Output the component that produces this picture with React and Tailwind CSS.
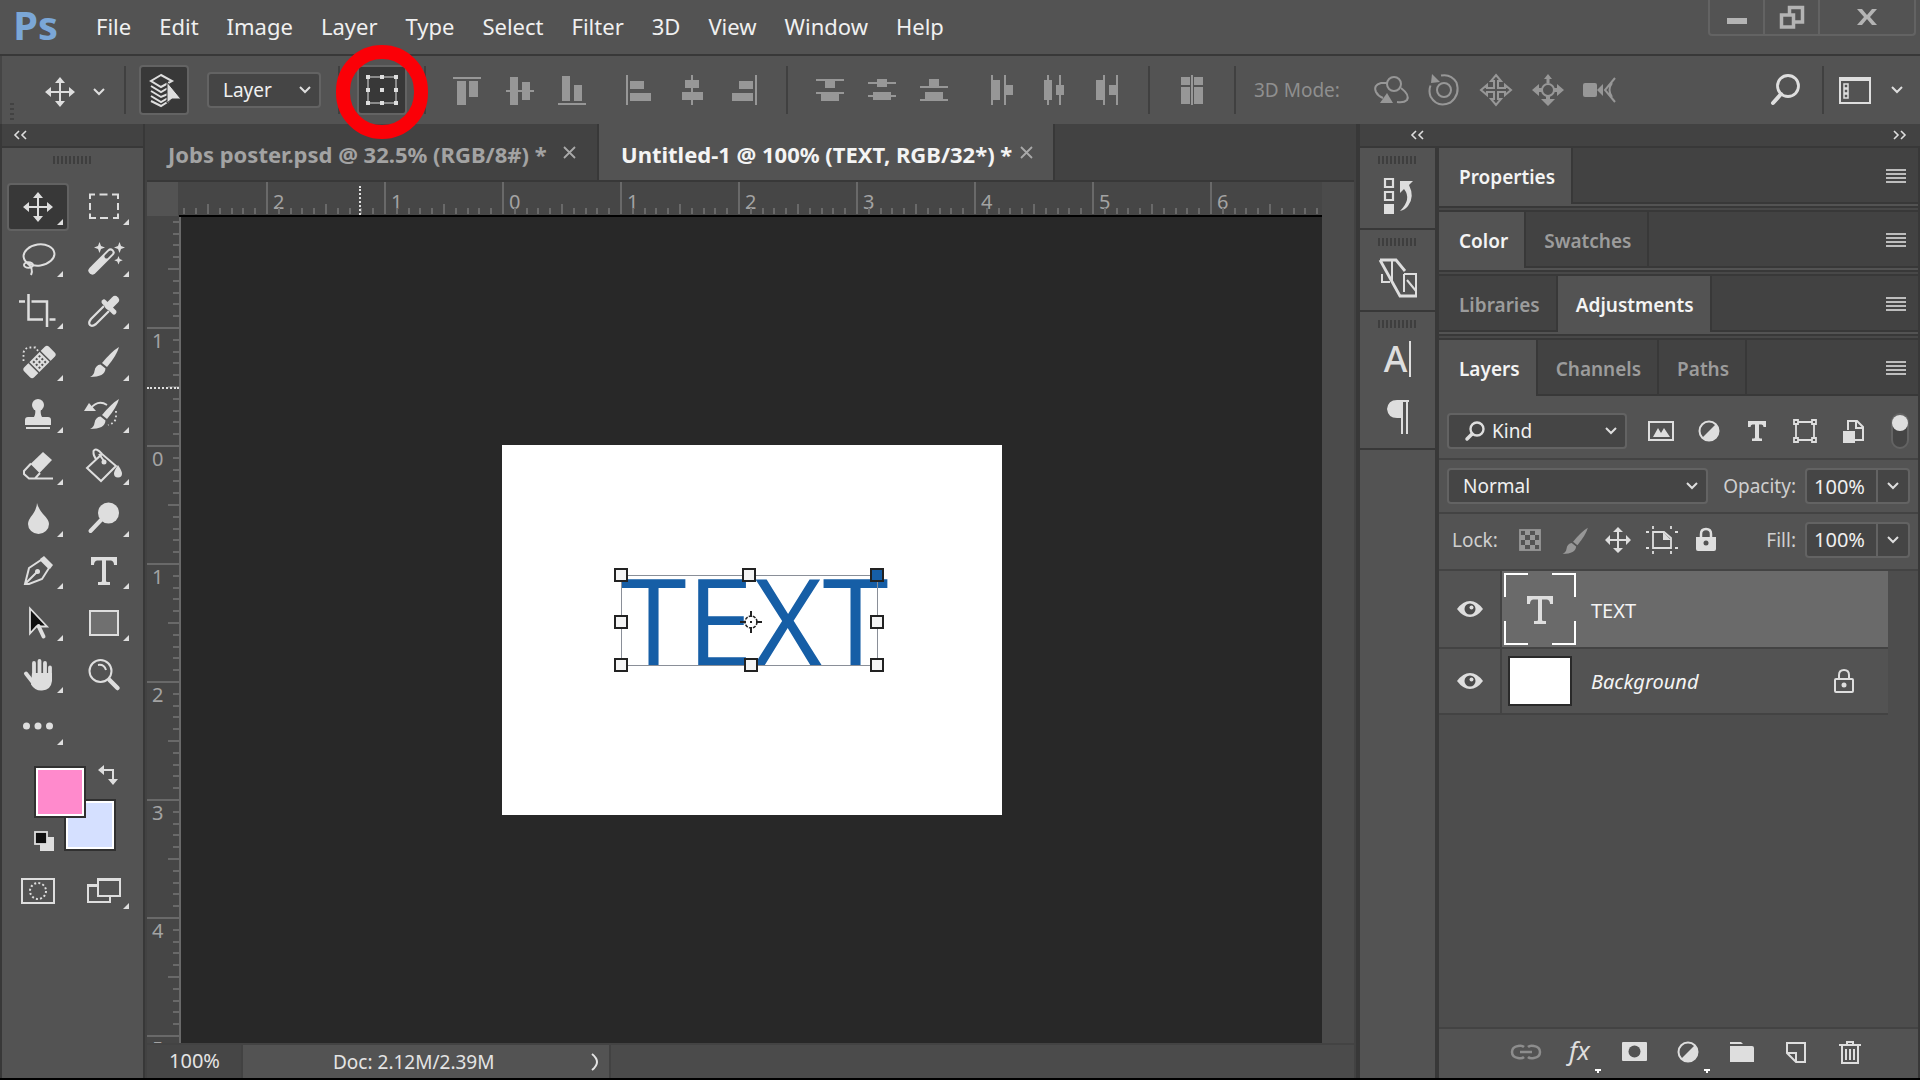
import React from "react";

const SANS = "font-['Noto_Sans','Open_Sans',sans-serif]";

function Svg({ w = 34, h = 34, className = "", children }) {
  return (
    <svg
      width={w}
      height={h}
      viewBox={`0 0 ${w} ${h}`}
      className={`shrink-0 overflow-visible ${className}`}
      fill="currentColor"
      aria-hidden="true"
    >
      {children}
    </svg>
  );
}

function Chevron({ className = "" }) {
  return (
    <Svg w={12} h={8} className={className}>
      <path d="M1 1l5 5 5-5" fill="none" stroke="currentColor" strokeWidth="2" />
    </Svg>
  );
}

const stroke = { fill: "none", stroke: "currentColor" };

/* ---------- tool glyphs (34 x 34) ---------- */

const MoveGlyph = () => (
  <>
    <path d="M17 5v24M5 17h24" {...stroke} strokeWidth="2" />
    <path d="M17 2l5 6H12zM17 32l5-6H12zM2 17l6-5v10zM32 17l-6-5v10z" />
  </>
);

const TypeGlyph = () => (
  <path d="M4 3h26v8h-3q0-4-3-4.500h-5V27q0 1 1.500 1H23v3H11v-3h2.500q1.500 0 1.500-1V6.500h-5q-3 .5-3 4.500H4z" />
);

const SmallTypeGlyph = () => (
  <path d="M2 1h18v6h-2.500q0-2.500-2-2.500H13V17.500q0 1 1.500 1H16V21H6v-2.500h1.500q1.500 0 1.500-1V4.500H6.500q-2 0-2 2.500H2z" />
);

const BrushShape = () => (
  <>
    <path d="M32 1q-2 8-12 20l-5-4Q25 5 32 1z" />
    <path d="M13.500 18.500l5 4Q18 31 3 31q4-2 4.500-6 1-6 6-6.500z" />
  </>
);

const TOOLS = [
  { name: "Move", active: true, glyph: <MoveGlyph /> },
  {
    name: "Rectangular Marquee",
    glyph: (
      <path
        d="M3 9V4.500h5M12.500 4.500h8M25 4.500h6V9M31 13v7M31 23.500V28h-5M21 28h-8M9 28H3v-4.500M3 20v-7"
        {...stroke}
        strokeWidth="2"
      />
    ),
  },
  {
    name: "Lasso",
    glyph: (
      <g {...stroke} strokeWidth="2">
        <ellipse cx="18" cy="13" rx="15.500" ry="10.500" transform="rotate(-8 18 13)" />
        <ellipse cx="7.500" cy="23" rx="4.500" ry="2.800" />
        <path d="M6 21q7 5 4 12" />
      </g>
    ),
  },
  {
    name: "Magic Wand",
    glyph: (
      <>
        <path d="M5.500 28.500L23.500 10.500" stroke="currentColor" strokeWidth="8" strokeLinecap="round" />
        <path d="M19.500 14.500l4-4" stroke="#535353" strokeWidth="4" strokeLinecap="round" />
        <path d="M12.500 0l1.500 4 4 1.500-4 1.500-1.500 4-1.500-4-4-1.500 4-1.500zM32.500 0l1.500 4 4 1.500-4 1.500-1.500 4-1.500-4-4-1.500 4-1.500zM31.500 14l1.200 3 3 1.300-3 1.200-1.200 3-1.200-3-3-1.200 3-1.300z" />
      </>
    ),
  },
  {
    name: "Crop",
    glyph: (
      <path d="M-2 7.500h6M7.500 0v25.500H22M10.500 7.500h15.500V33M28.500 25.500h6" {...stroke} strokeWidth="2.500" />
    ),
  },
  {
    name: "Eyedropper",
    glyph: (
      <>
        <path d="M22 12l6-6" stroke="currentColor" strokeWidth="8" strokeLinecap="round" />
        <path d="M17 8l10 10" stroke="currentColor" strokeWidth="5" strokeLinecap="round" />
        <path d="M17 12L4 25Q1 29 3 31q2 2 6-1L22 17" {...stroke} strokeWidth="2.200" />
      </>
    ),
  },
  {
    name: "Spot Healing Brush",
    glyph: (
      <>
        <g transform="rotate(-45 18.500 16)">
          <rect x="1" y="9" width="35" height="14" rx="3" />
          <path d="M10.500 8v16M26.500 8v16" stroke="#535353" strokeWidth="1.500" />
          <g fill="#535353">
            {[13.5, 17.5, 21.5].map((x) =>
              [11, 15, 19].map((y) => <rect key={`${x}-${y}`} x={x} y={y} width="2" height="2" />)
            )}
          </g>
        </g>
        <path d="M2.500 15V6.500Q4 2 8 1.500h6.500l3 4" {...stroke} strokeWidth="1.800" strokeDasharray="1.800 2.400" />
      </>
    ),
  },
  { name: "Brush", glyph: <BrushShape /> },
  {
    name: "Clone Stamp",
    glyph: (
      <>
        <circle cx="17" cy="7" r="6" />
        <path d="M14 10h6q-1 6 1 9h6q3 0 3 3v5H4v-5q0-3 3-3h6q2-3 1-9zM5 29h24v2H5z" />
      </>
    ),
  },
  {
    name: "History Brush",
    glyph: (
      <>
        <BrushShape />
        <path d="M3 11Q11 1 20 7" {...stroke} strokeWidth="1.800" />
        <path d="M-3 13l5-8 7 8z" />
        <path d="M29 13v7q-1 5-8 7" {...stroke} strokeWidth="1.800" strokeDasharray="1.800 2.600" />
      </>
    ),
  },
  {
    name: "Eraser",
    glyph: (
      <>
        <path d="M22 2l9 8-12.500 13-9-9z" />
        <path d="M10 13.500L3 21v3l5 4.500h6l5-5.500M8 28.500h24" {...stroke} strokeWidth="2" />
      </>
    ),
  },
  {
    name: "Paint Bucket",
    glyph: (
      <>
        <path d="M15 4L0 18l14 13 15-15zM15 4q-6-7-8.500-3Q6 6 10 10" {...stroke} strokeWidth="2" />
        <path d="M12 4l5 7" {...stroke} strokeWidth="2" />
        <circle cx="17" cy="12" r="2.500" />
        <path d="M31 15q4 6 4 8.500a4 4 0 0 1-8 0Q27 21 31 15z" />
      </>
    ),
  },
  { name: "Blur", glyph: <path d="M16 1q1 5 6 11 6 6 6 10a10.500 10 0 0 1-21 0q0-4 5-10 4-6 4-11z" /> },
  {
    name: "Dodge",
    glyph: (
      <>
        <circle cx="21.500" cy="11" r="10.500" />
        <path d="M14 18L3.500 29" stroke="currentColor" strokeWidth="4" strokeLinecap="round" />
      </>
    ),
  },
  {
    name: "Pen",
    glyph: (
      <>
        <path d="M4 30L8 14 20 6l8 8-7 11-13 5zM5 29L16 18" {...stroke} strokeWidth="2" />
        <circle cx="16.500" cy="17.500" r="2.500" />
        <path d="M23 2l9 9-3 4L19 5z" />
      </>
    ),
  },
  { name: "Horizontal Type", glyph: <TypeGlyph /> },
  {
    name: "Path Selection",
    glyph: (
      <>
        <path d="M9 2.500v25l6.500-7H26z" fill="#101010" stroke="currentColor" strokeWidth="1.800" />
        <path d="M17.500 20l5 10.500" stroke="currentColor" strokeWidth="4" strokeLinecap="round" />
      </>
    ),
  },
  {
    name: "Rectangle",
    glyph: <rect x="3" y="5" width="28" height="24" fill="#707070" stroke="currentColor" strokeWidth="2" />,
  },
  {
    name: "Hand",
    glyph: (
      <>
        <path d="M13 18V5M18.500 17V3M24 18V5M29 20V9.500" {...stroke} strokeWidth="3.800" strokeLinecap="round" />
        <path d="M5 15.500l7 9" {...stroke} strokeWidth="4" strokeLinecap="round" />
        <path d="M11 15h20v8q-1 9-10 9.500-7 .5-11-6z" />
      </>
    ),
  },
  {
    name: "Zoom",
    noMenu: true,
    glyph: (
      <>
        <circle cx="13.500" cy="13" r="11" {...stroke} strokeWidth="2" />
        <path d="M11 7q6-1 8 5" {...stroke} strokeWidth="2" />
        <path d="M22.500 22l8 8" stroke="currentColor" strokeWidth="4.500" strokeLinecap="round" />
      </>
    ),
  },
  {
    name: "Edit Toolbar",
    glyph: (
      <>
        <circle cx="5.500" cy="16" r="3.500" />
        <circle cx="17" cy="16" r="3.500" />
        <circle cx="28.500" cy="16" r="3.500" />
      </>
    ),
  },
];

function Tool({ name, glyph, active, noMenu }) {
  return (
    <button
      type="button"
      aria-label={name}
      className="relative flex h-13 items-center justify-center text-[#dedede]"
    >
      <span
        className={
          active
            ? "flex h-12 w-full items-center justify-center rounded border-2 border-[#626262] bg-[#383838] mx-[2px]"
            : "flex items-center justify-center"
        }
      >
        <Svg>{glyph}</Svg>
      </span>
      {!noMenu && (
        <Svg w={6} h={6} className="absolute right-2 bottom-2">
          <path d="M6 0v6H0z" />
        </Svg>
      )}
    </button>
  );
}

/* ---------- options bar ---------- */

const ALIGN = [
  ["Align top edges", <path d="M2 4h28v2H2zM6 8h9v24H6zM18 8h9v16h-9z" />],
  ["Align vertical centers", <path d="M3 17h28v2H3zM7 4h8v28H7zM19 9h8v18h-8z" />],
  ["Align bottom edges", <path d="M3 30h28v2H3zM7 3h8v25H7zM19 12h8v16h-8z" />],
];
const ALIGN_H = [
  ["Align left edges", <path d="M3 2h2v30H3zM7 8h14v8H7zM7 20h21v8H7z" />],
  ["Align horizontal centers", <path d="M16 2h2v30h-2zM10 7h14v8H10zM7 19h21v8H7z" />],
  ["Align right edges", <path d="M28 2h2v30h-2zM12 8h14v8H12zM5 20h21v8H5z" />],
];
const DIST_V = [
  ["Distribute top edges", <path d="M3 6h28v2H3zM12 8h10v7H12zM3 19h28v2H3zM8 21h18v7H8z" />],
  ["Distribute vertical centers", <path d="M3 9h28v2H3zM12 6h10v8H12zM3 22h28v2H3zM8 19h18v8H8z" />],
  ["Distribute bottom edges", <path d="M3 13h28v2H3zM12 6h10v7H12zM3 26h28v2H3zM8 19h18v7H8z" />],
];
const DIST_H = [
  ["Distribute left edges", <path d="M6 2h2v30H6zM8 7h7v20H8zM19 2h2v30h-2zM21 12h7v10h-7z" />],
  ["Distribute horizontal centers", <path d="M10 2h2v30h-2zM7 7h8v20H7zM22 2h2v30h-2zM19 12h8v10h-8z" />],
  ["Distribute right edges", <path d="M14 2h2v30h-2zM7 7h7v20H7zM27 2h2v30h-2zM20 12h7v10h-7z" />],
];
const AUTO = [
  ["Auto-align layers", <path d="M6 4h9v8H6zM6 14h9v17H6zM16 2h2v30h-2zM19 4h9v8h-9zM19 14h9v17h-9z" />],
];
const MODE_3D = [
  [
    "Orbit",
    <>
      <circle cx="19" cy="11" r="7" {...stroke} strokeWidth="2" />
      <path d="M12 10H6Q-2 12 1 19 3 23 8 25M26 15q9 7 6 12-3 3-10 2" {...stroke} strokeWidth="2" />
      <path d="M12 20l6 10H5z" />
    </>,
  ],
  [
    "Roll",
    <>
      <circle cx="17" cy="17" r="7" {...stroke} strokeWidth="2" />
      <path d="M14 2.500q10-2 15.500 7 4 12-6 20-13 6-20-6-2-6 0-11" {...stroke} strokeWidth="2" />
      <path d="M5 1l8 8-9 1z" />
    </>,
  ],
  [
    "Pan",
    <path
      d="M17 2l5 6h-3v7h7v-3l6 5-6 5v-3h-7v7h3l-5 6-5-6h3v-7H8v3l-6-5 6-5v3h7V8h-3z"
      {...stroke}
      strokeWidth="2"
    />,
  ],
  [
    "Slide",
    <>
      <circle cx="17" cy="17" r="6" {...stroke} strokeWidth="2" />
      <path d="M17 1l4 5h-2.500v4h-3V6H13zM1 17l7-6v4h3v4H8v4zM33 17l-7-6v4h-3v4h3v4zM17 33l-7-7h5v-3h4v3h5z" />
    </>,
  ],
  [
    "Zoom camera",
    <>
      <rect x="0" y="10" width="14" height="14" rx="2" />
      <path d="M14 17l6-6v12z" />
      <path d="M32 5L22 17l10 12M29 10q-5 7 0 14" {...stroke} strokeWidth="2" />
    </>,
  ],
];

function IconGroup({ items, className = "" }) {
  return (
    <div className={`flex ${className}`}>
      {items.map(([name, glyph]) => (
        <button key={name} type="button" aria-label={name} className="flex w-13 justify-center text-[#979797]">
          <Svg>{glyph}</Svg>
        </button>
      ))}
    </div>
  );
}

function Divider({ className = "" }) {
  return <span className={`h-12 w-[2px] shrink-0 bg-[#404040] ${className}`} />;
}

function SelectBox({ label, value, className = "", textClass = "", icon }) {
  return (
    <div className={`relative flex h-9 items-center rounded border-2 border-[#636363] bg-[#454545] ${className}`}>
      {icon}
      <select
        aria-label={label}
        defaultValue={value}
        className={`h-full w-full appearance-none bg-transparent text-[19px] leading-7 text-[#f0f0f0] outline-none ${textClass}`}
      >
        <option>{value}</option>
      </select>
      <Chevron className="pointer-events-none absolute right-2 text-[#dedede]" />
    </div>
  );
}

const MENUS = ["File", "Edit", "Image", "Layer", "Type", "Select", "Filter", "3D", "View", "Window", "Help"];

function TitleBar() {
  return (
    <header className="flex h-14 shrink-0 items-start border-b-2 border-[#383838] bg-[#535353]">
      <span className="w-24 pl-[13px] font-['Open_Sans',sans-serif] text-[40px] leading-[50px] font-bold text-[#7ba7d7]">
        Ps
      </span>
      <nav className="flex gap-7 pt-3" aria-label="Main menu">
        {MENUS.map((m) => (
          <button key={m} type="button" className="text-[22px] leading-7 text-[#f0f0f0]">
            {m}
          </button>
        ))}
      </nav>
      <div className="mr-1 ml-auto flex h-9 rounded-b border-2 border-t-0 border-[#636363] text-[#b4b4b4]">
        <button type="button" aria-label="Minimize" className="flex w-[55px] items-center justify-center border-r-2 border-[#636363]">
          <Svg w={20} h={20}>
            <path d="M0 11h20v6H0z" />
          </Svg>
        </button>
        <button type="button" aria-label="Restore" className="flex w-[55px] items-center justify-center border-r-2 border-[#636363]">
          <Svg w={24} h={24}>
            <path d="M1.500 10h12v12h-12zM9.500 10V2.500h13V17h-9" {...stroke} strokeWidth="3.500" />
          </Svg>
        </button>
        <button type="button" aria-label="Close" className="flex w-[94px] items-center justify-center">
          <Svg w={20} h={18}>
            <path d="M0 1h5l5 6 5-6h5l-7 8 7 8h-5l-5-6-5 6H0l7-8z" />
          </Svg>
        </button>
      </div>
    </header>
  );
}

function OptionsBar() {
  return (
    <div className="flex h-17 shrink-0 items-center border-l-2 border-[#454545] bg-[#535353]">
      <span className="mb-1 ml-2 flex w-1 flex-col gap-[3px] self-end">
        {[0, 1, 2, 3].map((i) => (
          <i key={i} className="h-[2px] bg-[#424242]" />
        ))}
      </span>
      <button type="button" aria-label="Move tool presets" className="ml-[29px] flex items-center gap-4 pt-1 text-[#dedede]">
        <Svg>
          <MoveGlyph />
        </Svg>
        <Chevron />
      </button>
      <Divider className="ml-[19px]" />
      <button
        type="button"
        aria-label="Auto-select"
        className="ml-[13px] flex h-[50px] w-[50px] items-center justify-center rounded border-2 border-[#636363] bg-[#383838] text-[#dedede]"
      >
        <Svg>
          <g {...stroke} strokeWidth="2">
            <path d="M14 2L4 8l10 6 11-6zM4 13l10 6 7-4M4 18l10 6 7-3M4 23l10 6 7-4M4 28l10 5 8-5" />
          </g>
          <path d="M20 9v21l5-4h9z" stroke="#383838" strokeWidth="1" />
        </Svg>
      </button>
      <SelectBox label="Auto-select target" value="Layer" className="ml-[18px] w-[114px]" textClass="pl-[14px]" />
      <Divider className="ml-[17px]" />
      <div className="relative ml-[17px]">
        <button
          type="button"
          aria-label="Show transform controls"
          className="flex h-[50px] w-[50px] items-center justify-center rounded border-2 border-[#636363] bg-[#383838] text-[#dedede]"
        >
          <Svg>
            <path d="M3 4h28v26H3z" {...stroke} strokeWidth="1" />
            <path d="M1 2h4v4H1zM15 2h4v4h-4zM29 2h4v4h-4zM1 15h4v4H1zM15 15h4v4h-4zM29 15h4v4h-4zM1 28h4v4H1zM15 28h4v4h-4zM29 28h4v4h-4z" />
          </Svg>
        </button>
        <span className="pointer-events-none absolute -top-5 -right-[21px] -bottom-6 -left-[21px] z-20 rounded-full border-[14px] border-[#fb0007]" />
      </div>
      <Divider className="ml-[17px]" />
      <IconGroup items={ALIGN} className="ml-4" />
      <IconGroup items={ALIGN_H} className="ml-4" />
      <Divider className="ml-4" />
      <IconGroup items={DIST_V} className="ml-4" />
      <IconGroup items={DIST_H} className="ml-4" />
      <Divider className="ml-4" />
      <IconGroup items={AUTO} className="ml-4" />
      <Divider className="ml-4" />
      <span className="ml-[18px] text-[19px] leading-7 text-[#8f8f8f]">3D Mode:</span>
      <IconGroup items={MODE_3D} className="ml-[26px]" />
      <button type="button" aria-label="Search" className="mr-[18px] ml-auto text-[#dedede]">
        <Svg>
          <circle cx="18" cy="13" r="10.500" {...stroke} strokeWidth="2.800" />
          <path d="M11 21l-8 9" stroke="currentColor" strokeWidth="4" strokeLinecap="round" />
        </Svg>
      </button>
      <Divider />
      <button type="button" aria-label="Workspace" className="mr-[17px] ml-[14px] flex items-center gap-[19px] text-[#dedede]">
        <Svg>
          <path d="M2 5h30v25H2z" {...stroke} strokeWidth="2" />
          <path d="M1 4h32v4H1z" />
          <path d="M6 11h4v4H6zM6 16h4v4H6zM6 21h4v4H6z" {...stroke} strokeWidth="1.500" />
        </Svg>
        <Chevron />
      </button>
    </div>
  );
}

/* ---------- tool panel ---------- */

function Arrows({ flip }) {
  return (
    <Svg w={13} h={10}>
      <path
        d={flip ? "M1 1l4 4-4 4M8 1l4 4-4 4" : "M5 1L1 5l4 4M12 1L8 5l4 4"}
        {...stroke}
        strokeWidth="1.600"
      />
    </Svg>
  );
}

function Grip() {
  return (
    <Svg w={40} h={8}>
      <path d="M1 0v8M5 0v8M9 0v8M13 0v8M17 0v8M21 0v8M25 0v8M29 0v8M33 0v8M37 0v8" stroke="#3e3e3e" strokeWidth="2" />
    </Svg>
  );
}

function ToolPanel() {
  return (
    <aside className="flex w-[145px] shrink-0 flex-col border-x-2 border-[#383838] bg-[#535353]">
      <button
        type="button"
        aria-label="Collapse tools"
        className="flex h-6 items-center border-b-2 border-[#383838] bg-[#424242] pl-3 text-[#dedede]"
      >
        <Arrows />
      </button>
      <div className="flex justify-center pt-2 pb-[17px]">
        <Grip />
      </div>
      <div className="ml-[3px] grid w-33 grid-cols-2">
        {TOOLS.map((t) => (
          <Tool key={t.name} {...t} />
        ))}
      </div>
      <div className="relative mt-[10px] ml-8 h-[84px] w-21 text-[#dedede]">
        <button type="button" aria-label="Background color" className="absolute top-9 right-[2px] size-[52px] border-2 border-[#303030] bg-[#d5e0ff] ring-2 ring-white ring-inset" />
        <button type="button" aria-label="Foreground color" className="absolute top-[3px] left-0 size-[52px] border-2 border-[#303030] bg-[#ff8acc] ring-2 ring-white ring-inset" />
        <button type="button" aria-label="Swap colors" className="absolute top-[2px] right-0">
          <Svg w={20} h={20}>
            <path d="M4 5h11v11" {...stroke} strokeWidth="2" />
            <path d="M0 5l6-5v10zM15 20l-5-6h10z" />
          </Svg>
        </button>
        <button type="button" aria-label="Default colors" className="absolute -bottom-1 left-0">
          <Svg w={20} h={20}>
            <path d="M6 6h14v14H6z" />
            <rect x="1" y="1" width="12" height="12" fill="#101010" stroke="currentColor" strokeWidth="1.800" />
          </Svg>
        </button>
      </div>
      <div className="mt-[18px] ml-[3px] grid w-33 grid-cols-2 text-[#dedede]">
        <button type="button" aria-label="Quick mask" className="flex h-13 items-center justify-center">
          <Svg>
            <rect x="1" y="5" width="32" height="24" {...stroke} strokeWidth="2" />
            <circle cx="17" cy="17" r="8" {...stroke} strokeWidth="2" strokeDasharray="2 2.200" />
          </Svg>
        </button>
        <button type="button" aria-label="Screen mode" className="relative flex h-13 items-center justify-center">
          <Svg>
            <path d="M10 11H1v17h22v-5M11 5h22v17H11z" {...stroke} strokeWidth="2" />
            <path d="M10 4h24v3H10zM0 10h11v3H0z" />
          </Svg>
          <Svg w={6} h={6} className="absolute right-2 bottom-2">
            <path d="M6 0v6H0z" />
          </Svg>
        </button>
      </div>
    </aside>
  );
}

/* ---------- document ---------- */

const H_UNITS = ["", 2, 1, 0, 1, 2, 3, 4, 5, 6];
const V_UNITS = ["", 1, 0, 1, 2, 3, 4, 5];
const TENTHS = [1, 2, 3, 4, 5, 6, 7, 8, 9];

function HRuler() {
  return (
    <div className="relative min-w-0 flex-1 overflow-hidden border-b-2 border-black bg-[#464646]">
      <div className="-ml-[31px] flex">
        {H_UNITS.map((n, i) => (
          <div key={i} className="h-8 w-[118px] shrink-0 border-l-2 border-[#696969]">
            <div className="-mb-8 h-8 pt-1 pl-[5px] text-xl leading-8 text-[#a3a3a3]">{n}</div>
            <Svg w={116} h={32} className="block">
              {TENTHS.map((t) => (
                <path key={t} d={`M${Math.round(t * 11.8) - 1} 32v${t === 5 ? -10 : -6}`} stroke="#696969" strokeWidth="2" />
              ))}
            </Svg>
          </div>
        ))}
      </div>
      <span className="absolute top-1 bottom-0 left-45 border-l-2 border-dotted border-[#e0e0e0]" />
    </div>
  );
}

function VRuler() {
  return (
    <div className="relative w-[34px] shrink-0 overflow-hidden border-r-2 border-[#696969] bg-[#464646]">
      <div className="-mt-2 flex flex-col">
        {V_UNITS.map((n, i) => (
          <div key={i} className="flex h-[118px] shrink-0 border-t-2 border-[#696969]">
            <div className="w-6 pl-[5px] text-xl leading-6 text-[#a3a3a3]">{n}</div>
            <Svg w={8} h={116}>
              {TENTHS.map((t) => (
                <path key={t} d={`M8 ${Math.round(t * 11.8) - 1}h${t === 5 ? -11 : -6}`} stroke="#696969" strokeWidth="2" />
              ))}
            </Svg>
          </div>
        ))}
      </div>
      <span className="absolute top-[170px] right-0 left-0 border-t-2 border-dotted border-[#e0e0e0]" />
    </div>
  );
}

const HANDLES = [
  [8, 8],
  [136, 8],
  [264, 8],
  [8, 55],
  [264, 55],
  [8, 98],
  [138, 98],
  [264, 98],
];

function Artboard() {
  return (
    <div className="relative h-[370px] w-[500px] bg-white">
      <div className="absolute top-[122px] left-[111px] h-[108px] w-[274px]">
        <span className="absolute -top-[22px] left-2 font-['Open_Sans',sans-serif] text-[120px] leading-[150px] whitespace-nowrap text-[#165ea6]">
          TEXT
        </span>
        <svg width="274" height="108" viewBox="0 0 274 108" className="absolute inset-0" aria-hidden="true">
          <rect x="8.500" y="8.500" width="256" height="90" fill="none" stroke="#8a8f98" />
          {HANDLES.map(([x, y]) => (
            <rect
              key={`${x}-${y}`}
              x={x - 6}
              y={y - 6}
              width="12"
              height="12"
              fill={x === 264 && y === 8 ? "#165ea6" : "#f4f4f4"}
              stroke="#222"
              strokeWidth="2"
            />
          ))}
          <g stroke="#222" strokeWidth="2" fill="none">
            <circle cx="138" cy="55" r="6" fill="#fff" strokeWidth="1.500" strokeDasharray="3 1.200" />
            <path d="M138 44v6M138 60v6M127 55h6M143 55h6M137 55h2" />
          </g>
        </svg>
      </div>
    </div>
  );
}

function DocTab({ title, active, className = "" }) {
  return (
    <div
      className={`flex h-full shrink-0 items-center border-r-2 border-[#383838] text-[22px] leading-7 ${
        active ? "bg-[#535353] text-[#f4f4f4]" : "bg-[#424242] text-[#a3a3a3]"
      } ${className}`}
    >
      <button type="button" className="pt-1 font-bold whitespace-nowrap">
        {title}
      </button>
      <button type="button" aria-label={`Close ${title}`} className="ml-auto text-[#a9a9a9]">
        <Svg w={13} h={13}>
          <path d="M1 1l11 11M12 1L1 12" {...stroke} strokeWidth="1.800" />
        </Svg>
      </button>
    </div>
  );
}

function DocumentArea() {
  return (
    <main className="flex min-w-0 flex-1 flex-col border-x-2 border-[#424242] bg-[#4a4a4a]">
      <div className="flex h-[58px] shrink-0 border-b-2 border-[#383838] bg-[#424242]">
        <DocTab title="Jobs poster.psd @ 32.5% (RGB/8#) *" className="w-[452px] pr-[21px] pl-[21px]" />
        <DocTab title="Untitled-1 @ 100% (TEXT, RGB/32*) *" active className="w-[456px] pr-5 pl-[22px]" />
      </div>
      <div className="flex min-h-0 flex-1">
        <div className="flex min-w-0 flex-1 flex-col">
          <div className="flex h-[35px] shrink-0">
            <div className="w-8 shrink-0 border-r border-b border-[#464646] bg-[#535353]" />
            <HRuler />
          </div>
          <div className="flex min-h-0 flex-1">
            <VRuler />
            <div className="flex min-w-0 flex-1 items-center justify-center bg-[#282828]">
              <Artboard />
            </div>
          </div>
        </div>
        <div className="w-8 shrink-0 bg-[#4b4b4b]" />
      </div>
      <footer className="flex h-[35px] shrink-0 items-center border-t-2 border-[#434343] bg-[#4b4b4b] text-[19px] leading-7 text-[#e4e4e4]">
        <span className="flex h-full w-24 items-center border-r-2 border-[#424242] bg-[#464646] pb-[2px] pl-[22px] text-xl leading-7">
          100%
        </span>
        <button type="button" className="flex h-full w-92 items-center border-r-2 border-[#424242] bg-[#535353] pr-[10px] pl-[90px]">
          Doc: 2.12M/2.39M
          <Svg w={8} h={18} className="ml-auto">
            <path d="M1 1q10 8 0 16" {...stroke} strokeWidth="2" />
          </Svg>
        </button>
      </footer>
    </main>
  );
}

/* ---------- right side ---------- */

function DockSection({ children, className }) {
  return (
    <div className={`flex flex-col items-center border-b-2 border-[#383838] bg-[#535353] pt-2 text-[#dedede] ${className}`}>
      <Grip />
      {children}
    </div>
  );
}

function Dock() {
  return (
    <div className="flex w-[77px] shrink-0 flex-col border-r-2 border-[#383838] bg-[#535353]">
      <DockSection className="h-[82px]">
        <button type="button" aria-label="History" className="mt-3">
          <Svg w={34} h={38}>
            <path d="M4 3h8v8H4zM4 16h8v8H4z" {...stroke} strokeWidth="2.200" />
            <path d="M3 28h10v10H3zM19 5h13l-4 4q6 12-1 21-3 4-8 5 12-12 4-22l-4 4z" />
          </Svg>
        </button>
      </DockSection>
      <DockSection className="h-[82px]">
        <button type="button" aria-label="3D" className="mt-[10px]">
          <Svg w={42} h={42}>
            <path d="M5 18v8h8M15 5v20M27 18h12v21M27 18v18M30 24l9 11" {...stroke} strokeWidth="2" />
            <path d="M3 4l20 36h17M3 4h16l9 11" {...stroke} strokeWidth="2.800" />
          </Svg>
        </button>
      </DockSection>
      <DockSection className="h-[138px]">
        <button type="button" aria-label="Character" className="mt-3 flex items-center gap-[2px]">
          <span className="text-[36px] leading-[38px] font-medium">A</span>
          <span className="h-9 w-[2px] bg-[#dedede]" />
        </button>
        <button type="button" aria-label="Paragraph" className="mt-[22px]">
          <Svg w={24} h={34}>
            <path d="M11 0h12v2H11zM11 0v18Q2 18 1 9 2 0 11 0zM11 2h6v32h-2V18h-4zM20 2h2v32h-2z" />
          </Svg>
        </button>
      </DockSection>
    </div>
  );
}

function PanelTabs({ tabs, active }) {
  return (
    <div className="flex h-14 shrink-0 items-stretch bg-[#424242]" role="tablist">
      {tabs.map((t) => (
        <button
          key={t}
          type="button"
          role="tab"
          aria-selected={t === active}
          className={`border-r-2 border-[#383838] pr-4 pl-[18px] text-[19px] leading-7 font-semibold first:pl-5 ${
            t === active ? "bg-[#535353] pt-[2px] text-[#f4f4f4]" : "border-b-2 pt-1 text-[#9c9c9c]"
          }`}
        >
          {t}
        </button>
      ))}
      <div className="flex flex-1 items-center justify-end border-b-2 border-[#383838] pt-1 pr-3 text-[#bdbdbd]">
        <button type="button" aria-label={`${active} menu`}>
          <Svg w={20} h={16}>
            <path d="M0 1h20M0 5h20M0 9h20M0 13h20" stroke="currentColor" strokeWidth="2" />
          </Svg>
        </button>
      </div>
    </div>
  );
}

const LockShape = ({ outline }) =>
  outline ? (
    <>
      <rect x="1" y="10" width="18" height="13" rx="1" {...stroke} strokeWidth="2" />
      <path d="M5 10V6q0-5 5-5t5 5v4" {...stroke} strokeWidth="2" />
      <circle cx="10" cy="16" r="2.500" />
    </>
  ) : (
    <>
      <path d="M0 9h20v12q0 2-2 2H2q-2 0-2-2z" />
      <path d="M5 10V6q0-5 5-5t5 5v4" {...stroke} strokeWidth="2.500" />
      <circle cx="10" cy="15" r="2.500" fill="#535353" />
    </>
  );

function HalfCircle() {
  return (
    <>
      <circle cx="11" cy="11" r="9.500" {...stroke} strokeWidth="2" />
      <path d="M18 4A9.500 9.500 0 0 1 4 18z" />
    </>
  );
}

const FILTERS = [
  [
    "Pixel layers",
    <>
      <rect x="-1" y="2" width="24" height="18" {...stroke} strokeWidth="2" />
      <path d="M3 17l5-9 3 5 3-5 6 9z" />
    </>,
  ],
  ["Adjustment layers", <HalfCircle />],
  ["Type layers", <SmallTypeGlyph />],
  [
    "Shape layers",
    <>
      <path d="M2 2h18v18H2z" {...stroke} strokeWidth="1.800" />
      <g fill="#535353" stroke="currentColor" strokeWidth="1.800">
        <path d="M0 0h4v4H0zM18 0h4v4h-4zM0 18h4v4H0zM18 18h4v4h-4z" />
      </g>
    </>,
  ],
  [
    "Smart objects",
    <>
      <path d="M6 10V1h9l6 6v13h-8M14 1v7h7" {...stroke} strokeWidth="2" />
      <path d="M1 11h12v12H1z" />
    </>,
  ],
];

const LOCKS = [
  [
    "Lock transparent pixels",
    <g className="text-[#979797]">
      <rect x="1" y="1" width="20" height="20" {...stroke} strokeWidth="1.800" />
      <path d="M6 1h5v5H6zM16 1h5v5h-5zM1 6h5v5H1zM11 6h5v5h-5zM6 11h5v5H6zM16 11h5v5h-5zM1 16h5v5H1zM11 16h5v5h-5z" />
    </g>,
  ],
  ["Lock image pixels", <g className="text-[#979797]" transform="translate(-3 -2) scale(.87)"><BrushShape /></g>],
  [
    "Lock position",
    <>
      <path d="M11 2v18M2 11h18" {...stroke} strokeWidth="2" />
      <path d="M11-2l5 5H6zM11 24l5-5H6zM-2 11l5-5v10zM24 11l-5-5v10z" />
    </>,
  ],
  [
    "Prevent auto-nesting",
    <>
      <path d="M2 3h11l7 6v10H2z" {...stroke} strokeWidth="1.800" />
      <path d="M12 3v8h8z" />
      <path d="M2 -3v3M20 -3v3M2 22v3M20 22v3M-5 3h3M24 3h3M-5 19h3M24 19h3" {...stroke} strokeWidth="1.800" />
    </>,
  ],
  ["Lock all", <g transform="translate(1 -1)"><LockShape /></g>],
];

function IconButtons({ items, gap }) {
  return (
    <div className={`flex items-center text-[#dedede] ${gap}`}>
      {items.map(([name, glyph]) => (
        <button key={name} type="button" aria-label={name}>
          <Svg w={22} h={22}>{glyph}</Svg>
        </button>
      ))}
    </div>
  );
}

function PercentField({ label, id }) {
  return (
    <div className="ml-auto flex items-center">
      <label htmlFor={id} className="mr-[9px] text-[19px] leading-7 text-[#cfcfcf]">
        {label}
      </label>
      <div className="flex h-9 w-[105px] items-center rounded border-2 border-[#636363] bg-[#454545]">
        <input
          id={id}
          defaultValue="100%"
          className="h-full min-w-0 flex-1 border-r-2 border-[#636363] bg-transparent pl-[7px] text-xl leading-7 text-[#f0f0f0] outline-none"
        />
        <button type="button" aria-label={`${label} slider`} className="flex w-[30px] justify-center text-[#dedede]">
          <Chevron />
        </button>
      </div>
    </div>
  );
}

function Eye() {
  return (
    <Svg w={26} h={16} className="text-[#dedede]">
      <path d="M0 8Q6 0 13 0t13 8q-6 8-13 8T0 8z" />
      <circle cx="13" cy="8" r="5.500" fill="#4b4b4b" />
      <circle cx="14.500" cy="6.500" r="2" />
    </Svg>
  );
}

function LayerRow({ name, selected, children, end, className }) {
  return (
    <li className={`flex border-b-2 border-[#434343] ${className}`}>
      <button type="button" aria-label={`Toggle ${name}`} className="flex w-[63px] items-center justify-center border-r-2 border-[#434343] bg-[#535353]">
        <Eye />
      </button>
      <div className={`flex flex-1 items-center ${selected ? "bg-[#6a6a6a]" : "bg-[#535353]"}`}>
        <div className="flex w-20 justify-center pr-1">{children}</div>
        <span className={`pl-[9px] text-xl leading-7 text-[#f4f4f4] ${selected ? "pt-1" : "pt-[2px] italic"}`}>{name}</span>
        {end}
      </div>
    </li>
  );
}

const FOOTER = [
  [
    "Link layers",
    <g className="text-[#8d8d8d]" {...stroke} strokeWidth="2.500">
      <path d="M9 16q-2 2-6 1-6-1-6-6t6-6q4-1 6 1M13 6q2-2 6-1 6 1 6 6t-6 6q-4 1-6-1M5 11h12" />
    </g>,
  ],
  [
    "Layer style",
    <>
      <text x="0" y="19" className="font-['Noto_Sans',sans-serif] text-[26px] italic">
        fx
      </text>
      <path d="M26 28h6v2h-2v2h-2v-2h-2z" fill="#fff" />
    </>,
  ],
  [
    "Layer mask",
    <>
      <rect x="-1" y="1" width="25" height="19" rx="1" />
      <circle cx="11.500" cy="10.500" r="6" fill="#535353" />
    </>,
  ],
  [
    "Adjustment layer",
    <>
      <HalfCircle />
      <path d="M27 28h6v2h-2v2h-2v-2h-2z" fill="#fff" />
    </>,
  ],
  ["New group", <path d="M-1 1h11l2 2H-1zM-1 5h22q2 0 2 2v14H-1z" />],
  [
    "New layer",
    <>
      <path d="M2 2h18v19h-9L2 12z" {...stroke} strokeWidth="2" />
      <path d="M2 12h9v9" {...stroke} strokeWidth="2" />
    </>,
  ],
  [
    "Delete layer",
    <>
      <path d="M0 4h22M8 4V1h6v3M3 5v17h16V5M7 8v11M11 8v11M15 8v11" {...stroke} strokeWidth="2" />
    </>,
  ],
];

function Panels() {
  return (
    <div className="flex min-w-0 flex-1 flex-col border-x-2 border-[#383838] bg-[#4d4d4d]">
      {[
        [["Properties"], "Properties"],
        [["Color", "Swatches"], "Color"],
        [["Libraries", "Adjustments"], "Adjustments"],
      ].map(([tabs, active]) => (
        <div key={active} className="flex shrink-0 flex-col border-b-2 border-[#383838] bg-[#535353]">
          <PanelTabs tabs={tabs} active={active} />
          <div className="mt-[2px] h-[2px] bg-[#383838]" />
          <div className="h-[2px] bg-[#484848]" />
        </div>
      ))}
      <PanelTabs tabs={["Layers", "Channels", "Paths"]} active="Layers" />
      <section className="flex min-h-0 flex-1 flex-col" aria-label="Layers">
        <div className="flex h-16 shrink-0 items-center border-b-2 border-[#434343] bg-[#535353] pt-2 pr-[9px] pl-2">
          <SelectBox
            label="Filter kind"
            value="Kind"
            className="w-[180px]"
            textClass="pl-[7px]"
            icon={
              <Svg w={20} h={20} className="ml-4 text-[#dedede]">
                <circle cx="12" cy="8" r="6.500" {...stroke} strokeWidth="2.400" />
                <path d="M7 13l-5 5" stroke="currentColor" strokeWidth="3.500" strokeLinecap="round" />
              </Svg>
            }
          />
          <div className="ml-[23px]">
            <IconButtons items={FILTERS} gap="gap-[26px]" />
          </div>
          <label className="ml-auto flex h-9 w-[18px] cursor-pointer justify-center rounded-full border-2 border-[#636363] bg-[#454545]">
            <input type="checkbox" aria-label="Filter toggle" defaultChecked className="size-4 shrink-0 appearance-none rounded-full bg-[#dedede]" />
          </label>
        </div>
        <div className="flex h-[54px] shrink-0 items-center border-b-2 border-[#434343] bg-[#535353] px-2">
          <SelectBox label="Blend mode" value="Normal" className="w-[261px]" textClass="pl-[14px]" />
          <PercentField label="Opacity:" id="opacity" />
        </div>
        <div className="flex h-[57px] shrink-0 items-center border-b-2 border-[#434343] bg-[#535353] px-2 pb-1">
          <span className="w-[72px] pl-[5px] text-[19px] leading-7 text-[#cfcfcf]">Lock:</span>
          <IconButtons items={LOCKS} gap="gap-[22px]" />
          <PercentField label="Fill:" id="fill" />
        </div>
        <ul className="mr-[30px]">
          <LayerRow name="TEXT" selected className="h-[78px]">
            <Svg w={72} h={72} className="text-[#dedede]">
              <path d="M1 24V1h23M48 1h23v23M71 48v23H48M24 71H1V48" fill="none" stroke="#fff" strokeWidth="2" />
              <g transform="translate(19 20)">
                <TypeGlyph />
              </g>
            </Svg>
          </LayerRow>
          <LayerRow
            name="Background"
            className="h-[66px]"
            end={
              <Svg w={20} h={24} className="mr-[34px] ml-auto text-[#dedede]">
                <LockShape outline />
              </Svg>
            }
          >
            <span className="h-[50px] w-16 border-2 border-[#2a2a2a] bg-white" />
          </LayerRow>
        </ul>
        <div className="mt-auto flex h-[51px] shrink-0 items-center justify-end border-t-2 border-[#434343] bg-[#535353] pr-[57px] pb-[3px]">
          <IconButtons items={FOOTER} gap="gap-8" />
        </div>
      </section>
    </div>
  );
}

function RightSide() {
  return (
    <aside className="flex w-[564px] shrink-0 flex-col border-l-4 border-[#383838] bg-[#424242]">
      <div className="flex h-6 shrink-0 items-center justify-between border-b-2 border-[#383838] pr-[14px] pl-[51px] text-[#dedede]">
        <button type="button" aria-label="Expand dock">
          <Arrows />
        </button>
        <button type="button" aria-label="Collapse panels">
          <Arrows flip />
        </button>
      </div>
      <div className="flex min-h-0 flex-1">
        <Dock />
        <Panels />
      </div>
    </aside>
  );
}

export default function App() {
  return (
    <div className={`flex h-screen flex-col overflow-hidden border-b-2 border-black bg-[#535353] ${SANS}`}>
      <TitleBar />
      <OptionsBar />
      <div className="flex min-h-0 flex-1">
        <ToolPanel />
        <DocumentArea />
        <RightSide />
      </div>
    </div>
  );
}
